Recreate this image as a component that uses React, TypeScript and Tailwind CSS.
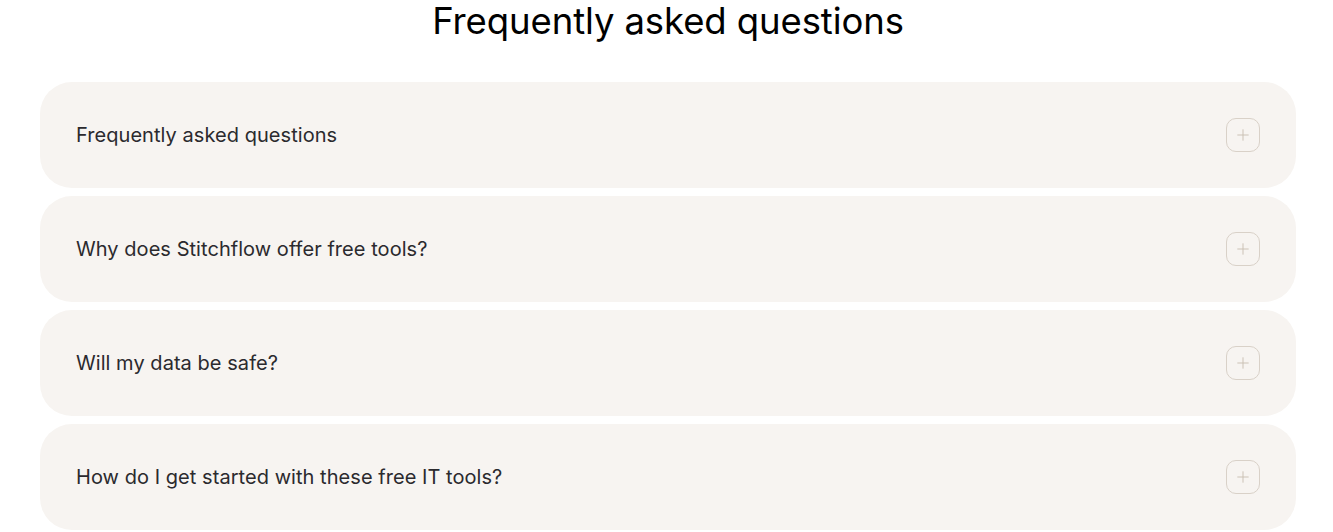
import React from 'react'
import { Plus } from 'lucide-react'

const QUESTIONS = [
  'Frequently asked questions',
  'Why does Stitchflow offer free tools?',
  'Will my data be safe?',
  'How do I get started with these free IT tools?',
]

export default function App() {
  const [open, setOpen] = React.useState<number | null>(null)

  return (
    <div className="min-h-screen bg-white font-['Inter',sans-serif]">
      <div className="ml-[40px] w-[1256px] pb-8">
        <h2 className="text-center text-[36.5px] leading-[42px] font-normal tracking-[-0.1px] text-black">
          Frequently asked questions
        </h2>

        <div className="mt-[40px] flex flex-col gap-[8px]">
          {QUESTIONS.map((q, i) => (
            <button
              key={q}
              onClick={() => setOpen(open === i ? null : i)}
              className="flex h-[106px] w-full items-center justify-between rounded-[32px] bg-[#f7f4f1] pl-[36px] pr-[36px] text-left"
            >
              <span className="text-[20px] font-normal tracking-[0.05px] text-[#2b2a2e]">{q}</span>
              <span className="flex h-[34px] w-[34px] items-center justify-center rounded-[10px] border border-[#d9d1c8]">
                <Plus size={18} strokeWidth={1.25} className="text-[#c9bfb2]" />
              </span>
            </button>
          ))}
        </div>
      </div>
    </div>
  )
}
